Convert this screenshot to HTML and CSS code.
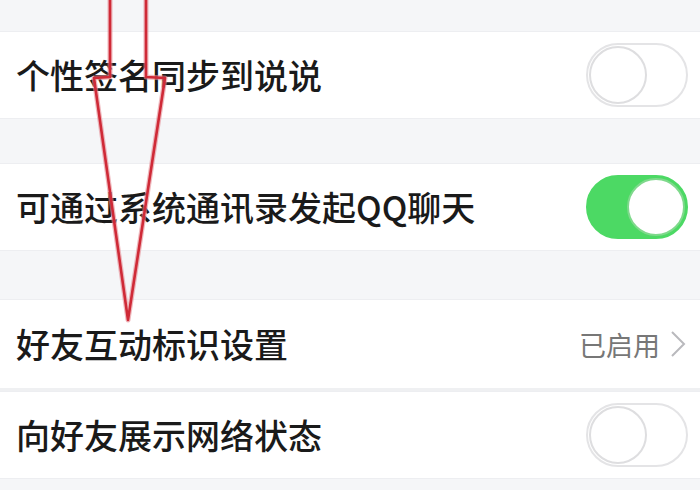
FILE: index.html
```html
<!DOCTYPE html>
<html lang="zh-CN">
<head>
<meta charset="utf-8">
<title>设置</title>
<link rel="stylesheet" href="styles.css">
</head>
<body>
<div class="page">
  <div class="gap gap-top"></div>
  <div class="row">
    <span class="label">个性签名同步到说说</span>
    <span class="switch"><span class="knob"></span></span>
  </div>
  <div class="gap gap-a"></div>
  <div class="row">
    <span class="label">可通过系统通讯录发起QQ聊天</span>
    <span class="switch on"><span class="knob"></span></span>
  </div>
  <div class="gap gap-b"></div>
  <div class="row row-sep">
    <span class="label">好友互动标识设置</span>
    <span class="detail">已启用
      <svg class="chev" width="16" height="28" viewBox="0 0 16 28"><path d="M2 2 L14 14 L2 26" fill="none" stroke="#b9b9bd" stroke-width="2"/></svg>
    </span>
  </div>
  <div class="row">
    <span class="label">向好友展示网络状态</span>
    <span class="switch"><span class="knob"></span></span>
  </div>
  <div class="gap gap-bottom"></div>

  <svg class="arrow" width="700" height="490" viewBox="0 0 700 490">
    <g fill="none" stroke-linejoin="round" stroke-linecap="round">
      <polyline points="110,-2 110,77 94,78 128,320 165,78 146,77 146,-2" stroke="#e58a93" stroke-width="5" opacity="0.6"/>
      <polyline points="110,-2 110,77 94,78 128,320 165,78 146,77 146,-2" stroke="#cf2a37" stroke-width="2.6"/>
    </g>
  </svg>
</div>
</body>
</html>
```

FILE: styles.css
```css
html, body {
  margin: 0;
  padding: 0;
}
body {
  background: #f5f6f8;
  font-family: "Noto Sans CJK SC", "Noto Sans", sans-serif;
}
.page {
  position: relative;
  width: 700px;
  height: 490px;
  overflow: hidden;
  display: flex;
  flex-direction: column;
  background: #f5f6f8;
}
.gap { flex: none; }
.gap-top { height: 31px; }
.gap-a { height: 44px; }
.gap-b { height: 48px; }
.gap-bottom { flex: 1; }
.row {
  flex: none;
  height: 88px;
  background: #fff;
  display: flex;
  align-items: center;
  justify-content: space-between;
  padding: 0 12px 0 16px;
  box-sizing: border-box;
  border-top: 1px solid #edeef1;
  border-bottom: 1px solid #edeef1;
}
.row-sep {
  height: 92px;
  border-bottom: 3px solid #eff0f2;
}
.label {
  font-size: 34px;
  font-weight: 500;
  color: #1a1a1a;
  line-height: 1;
}
.switch {
  position: relative;
  width: 102px;
  height: 64px;
  border-radius: 32px;
  box-sizing: border-box;
  border: 2px solid #e4e4e6;
  background: #fff;
  flex: none;
}
.switch .knob {
  position: absolute;
  top: 1px;
  left: 1px;
  width: 58px;
  height: 58px;
  border-radius: 50%;
  background: #fff;
  box-sizing: border-box;
  border: 2px solid #dedee0;
}
.switch.on {
  background: #4cd964;
  border-color: #4cd964;
}
.switch.on .knob {
  left: auto;
  right: 1px;
  border-color: #7fd98c;
}
.detail {
  display: flex;
  align-items: center;
  gap: 10px;
  font-size: 27px;
  color: #777;
  line-height: 1;
  padding-right: 2px;
}
.chev { display: block; }
.arrow {
  position: absolute;
  left: 0;
  top: 0;
  pointer-events: none;
}
```
